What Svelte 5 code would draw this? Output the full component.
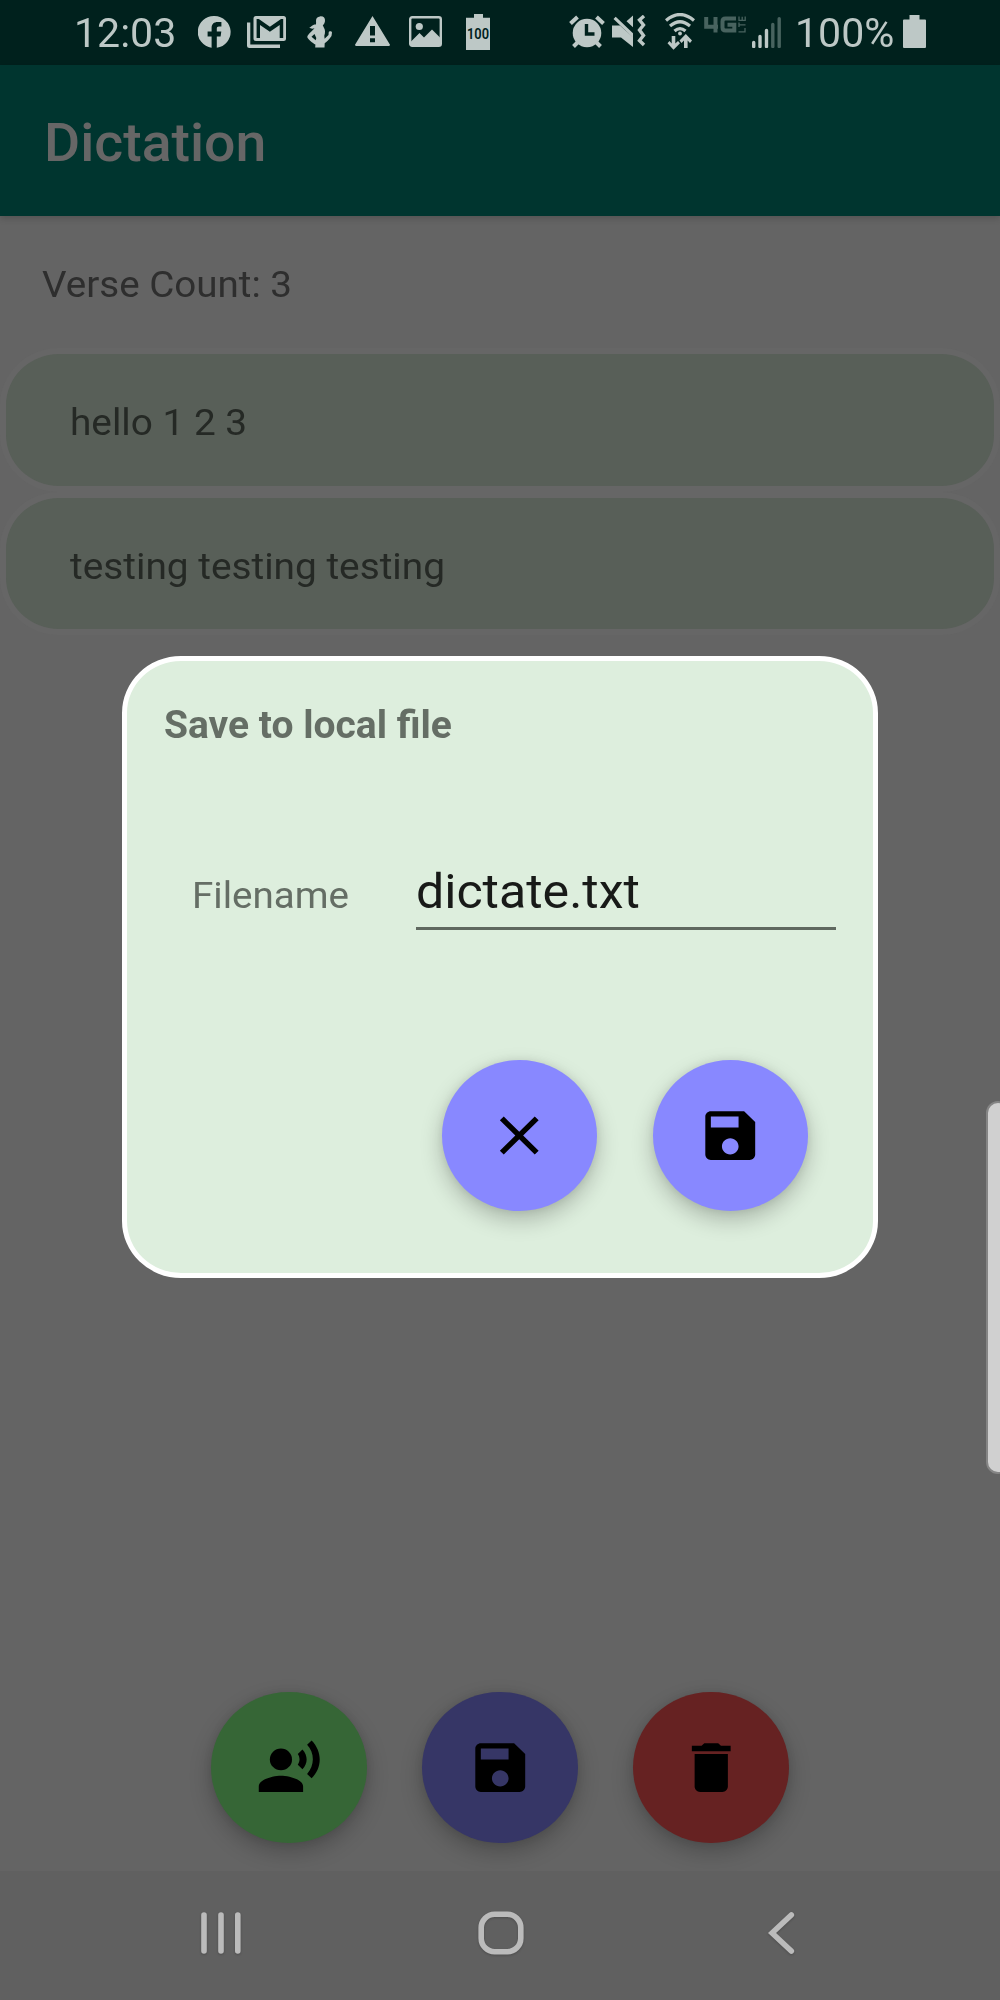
<script>
  const verses = ['hello 1 2 3', 'testing testing testing'];
  const title = 'Dictation';
  const count = 3;
</script>

{#snippet saveIcon()}
  <svg class="glyph" viewBox="0 0 24 24" preserveAspectRatio="none">
    <path d="M17 3H5c-1.11 0-2 .9-2 2v14c0 1.1.89 2 2 2h14c1.1 0 2-.9 2-2V7l-4-4zm-5 16c-1.66 0-3-1.34-3-3s1.34-3 3-3 3 1.34 3 3-1.34 3-3 3zm3-10H5V5h10v4z" />
  </svg>
{/snippet}

<div class="screen">
  <header class="status">
    <span class="time"><span class="wide">12:03</span></span>
    <svg class="i-fb" viewBox="0 0 33 32" width="33" height="32">
      <path d="M16.5 0A16.4 16 0 0 0 13.6 31.8V20.4H9.6V15.6H13.6V12.2C13.6 8 15.8 6 19.8 6H23.4V10.4H21C19.4 10.4 18.8 11.1 18.8 12.6V15.6H23.3L22.6 20.4H18.8V31.8A16.4 16 0 0 0 16.5 0Z" />
    </svg>
    <svg class="i-mail" viewBox="0 0 39 32" width="39" height="32">
      <path fill-rule="evenodd" d="M9 0H36.5Q39 0 39 2.500V22.500Q39 25 36.500 25H9Q6.500 25 6.500 22.500V2.500Q6.500 0 9 0ZM9.600 3V22H13V9L22.900 15.800L32.700 9V22H36.200V3H34L22.900 10.800L11.800 3Z" />
      <path d="M0 6.500H3.300V28.500H33V32H2.500Q0 32 0 29.500Z" />
    </svg>
    <svg class="i-run" viewBox="0 0 25 32" width="25" height="32">
      <path fill-rule="evenodd" d="M13 0.400C16.500 0 18.300 2.200 18 5C17.800 7 17 8.300 15.800 9.200L16.800 11.500C18.300 13.500 18.400 17 17.300 19.800L17.600 22.800L21.500 19L21.700 16.400C22 15 24.800 15 25 16.600L24.500 20C22 23.600 19.800 25.800 17.700 27.300L17.500 31.500H8.200L8.400 28.500C5.500 27 1.500 23.500 0.300 21.200C0.200 19 4.500 15.500 7.500 12.300C5.500 12.900 3.500 12.700 2 11.600C4.500 11.300 4.500 8.500 8.900 8.500C9.300 7.200 9 6.200 9 4.800C9 2 10.500 .7 13 .4ZM7.500 18L4.500 20.800L8.700 24.300L9.300 22Z" />
    </svg>
    <svg class="i-warn" viewBox="0 0 35 30" width="35" height="30">
      <path fill-rule="evenodd" d="M17.500 0L35 28.800Q35 30 33.500 30H1.500Q0 30 0 28.800ZM15 10V19.500H20V10ZM15 22.300V26.300H20V22.300Z" />
    </svg>
    <svg class="i-pic" viewBox="0 0 33 31" width="33" height="31">
      <rect x="1.200" y="1.200" width="30.600" height="28.600" rx="2" fill="none" stroke="#bdc8c6" stroke-width="2.400" />
      <circle cx="10.300" cy="10.500" r="3.600" />
      <path d="M2 25.500L10.500 17L15 21.500L23 13.500L31 21.500V29.500H2Z" />
    </svg>
    <svg class="i-bat100" viewBox="0 0 24 36" width="24" height="36">
      <path d="M8 0H17V3.700H24V36H0V3.700H8Z" />
      <text x="12" y="25" class="pct-mini" text-anchor="middle" textLength="22" lengthAdjust="spacingAndGlyphs">100</text>
    </svg>

    <svg class="i-alarm" viewBox="0 0 36 33" width="36" height="33">
      <circle cx="18" cy="18" r="14.300" />
      <path d="M1.500 8.500L8.500 2M34.500 8.500L27.500 2M9 27L4.500 31.500M27 27L31.500 31.500" fill="none" stroke="#bdc8c6" stroke-width="4" />
      <path d="M17.500 9V19H25.500" fill="none" stroke="#00211d" stroke-width="3.400" />
    </svg>
    <svg class="i-mute" viewBox="0 0 34 32" width="34" height="32">
      <path d="M0 10.500H8L21 22.500V32L9 22.500H0ZM21 .5V12.200L14.500 6.200ZM1.500 4L3.700 1.800L21 18.300V22.500Z" />
      <path d="M32 1L27.500 5L31.500 10L27.500 15L31.500 20.500L27.500 25.500L32 30" fill="none" stroke="#bdc8c6" stroke-width="3.400" />
    </svg>
    <svg class="i-wifi" viewBox="0 0 30 37" width="30" height="37">
      <path d="M1 7.500Q15-4.500 29 7.500M5 13Q15 4.500 25 13M9.500 18Q15 13.200 20.500 18" fill="none" stroke="#bdc8c6" stroke-width="3.200" />
      <circle cx="15" cy="20.500" r="1.900" />
      <path d="M6.700 23H10.300V30.500L13 28L15 30.300L8.500 36.700L2.500 30.300L4.500 28L6.700 30.500ZM19 35H22.600V27.500L25 30L27 27.500L20.800 21L14.500 27.500L16.500 30L19 27.500Z" />
    </svg>
    <svg class="i-lte" viewBox="0 0 42 18" width="42" height="18">
      <path d="M2.200 1V10.800H14M11.500 1V16.500M32 2.500H21.500Q18.500 2.500 18.500 5.500V11.500Q18.500 14.500 21.500 14.500H30.300V8.700H23.500" fill="none" stroke="#48635f" stroke-width="4" />
      <path d="M34.500 15.800H41V12M35 6.500V11M35 8.800H41.500M35 .5V4.300H41.200V.5M38.200 .8V4.300" fill="none" stroke="#48635f" stroke-width="1.300" />
    </svg>
    <svg class="i-signal" viewBox="0 0 29 31" width="29" height="31">
      <path d="M1.700 25.500V29.500M8 19.500V29.500M14.500 13.500V29.500" stroke="#bdc8c6" stroke-width="3.400" stroke-linecap="round" />
      <path d="M20.800 7.500V29.500M27.200 1.700V29.500" stroke="#48635f" stroke-width="3.400" stroke-linecap="round" />
    </svg>
    <span class="level"><span class="wide">100%</span></span>
    <svg class="i-bat" viewBox="0 0 23 33" width="23" height="33">
      <path d="M6.500 0H16.500V4.500H22Q23 4.500 23 5.500V32Q23 33 22 33H1Q0 33 0 32V5.500Q0 4.500 1 4.500H6.500Z" />
    </svg>
  </header>

  <div class="appbar"><h1 class="wide">{title}</h1></div>

  <main>
    <p class="count"><span class="wide">Verse Count: {count}</span></p>
    <ul>
      {#each verses as verse}
        <li><span class="wide">{verse}</span></li>
      {/each}
    </ul>
    <div class="actions">
      <button class="fab green" aria-label="Dictate">
        <svg class="glyph" viewBox="0 0 24 24" preserveAspectRatio="none">
          <circle cx="9" cy="9" r="4" />
          <path d="M9 15c-2.670 0-8 1.340-8 4v2h16v-2c0-2.660-5.330-4-8-4zm7.760-9.640l-1.680 1.690c.84 1.180.84 2.710 0 3.890l1.680 1.690c2.020-2.020 2.020-5.070 0-7.270zM20.070 2l-1.630 1.630c2.770 3.020 2.770 7.560 0 10.740L20.070 16c3.900-3.890 3.910-9.950 0-14z" />
        </svg>
      </button>
      <button class="fab blue" aria-label="Save">{@render saveIcon()}</button>
      <button class="fab red" aria-label="Delete">
        <svg class="glyph" viewBox="0 0 24 24" preserveAspectRatio="none">
          <path d="M6 19c0 1.100.9 2 2 2h8c1.100 0 2-.9 2-2V7H6v12zM19 4h-3.500l-1-1h-5l-1 1H5v2h14V4z" />
        </svg>
      </button>
    </div>
  </main>

  <nav>
    <svg class="recents" viewBox="0 0 40 42" width="40" height="42">
      <path d="M3 3V39M20 3V39M36.800 3V39" />
    </svg>
    <svg class="home" viewBox="0 0 46 44" width="46" height="44">
      <rect x="3.200" y="3.200" width="39.600" height="37.600" rx="13.500" />
    </svg>
    <svg class="back" viewBox="0 0 27 42" width="27" height="42">
      <path d="M23.300 3L4 21L23.300 39" />
    </svg>
  </nav>

  <div class="overlay">
    <section class="dialog">
      <h2><span class="wide">Save to local file</span></h2>
      <div class="field">
        <span class="label"><span class="wide">Filename</span></span>
        <span class="value"><span class="wide">dictate.txt</span></span>
      </div>
      <div class="buttons">
        <button class="fab lilac" aria-label="Cancel">
          <svg class="glyph" viewBox="0 0 24 24" preserveAspectRatio="none">
            <path d="M19 6.410L17.590 5 12 10.590 6.410 5 5 6.410 10.590 12 5 17.590 6.410 19 12 13.410 17.590 19 19 17.590 13.410 12z" />
          </svg>
        </button>
        <button class="fab lilac" aria-label="Save file">{@render saveIcon()}</button>
      </div>
    </section>
  </div>
  <div class="edge"></div>
</div>

<style>
  :global(body) {
    margin: 0;
    background: #646464;
  }
  .screen {
    position: relative;
    width: 1000px;
    height: 2000px;
    overflow: hidden;
    display: flex;
    flex-direction: column;
    background: #646464;
    font-family: Roboto, sans-serif;
  }
  /* glyphs are slightly wider than the font's natural proportions */
  .wide {
    display: inline-block;
    transform: scaleX(1.026);
    transform-origin: left center;
    white-space: nowrap;
  }
  h1, h2, p, ul {
    margin: 0;
    padding: 0;
  }
  .status {
    height: 65px;
    flex: none;
    display: flex;
    align-items: flex-start;
    background: #00211d;
    color: #bdc8c6;
    fill: #bdc8c6;
  }
  .status svg {
    flex: none;
    display: block;
  }
  .time, .level {
    flex: none;
    font-size: 40px;
    line-height: 47px;
    margin-top: 10px;
  }
  .time { margin-left: 74px; width: 124px; }
  .level { margin-left: 14px; width: 108px; }
  .i-fb { margin-top: 16px; }
  .i-mail { margin: 16px 0 0 16px; }
  .i-run { margin: 16px 0 0 21px; }
  .i-warn { margin: 16px 0 0 23px; }
  .i-pic { margin: 16px 0 0 19px; }
  .i-bat100 { margin: 14px 0 0 24px; }
  .i-alarm { margin: 15px 0 0 79px; }
  .i-mute { margin: 15px 0 0 7px; }
  .i-wifi { margin: 13px 0 0 19px; }
  .i-lte { margin: 16px 0 0 9px; }
  .i-signal { margin: 17px 0 0 6px; }
  .i-bat { margin-top: 15px; }
  .pct-mini {
    font: 600 14px Roboto, sans-serif;
    fill: #00211d;
  }
  .appbar {
    height: 151px;
    flex: none;
    display: flex;
    align-items: center;
    padding-left: 44px;
    box-sizing: border-box;
    background: #00352f;
    color: #666;
    box-shadow: 0 2px 7px rgba(0, 0, 0, .2);
    z-index: 1;
  }
  h1 {
    font-size: 54px;
    font-weight: 500;
    line-height: 64px;
    padding-top: 4px;
  }
  main {
    flex: none;
    height: 1655px;
    display: flex;
    flex-direction: column;
  }
  .count {
    height: 132px;
    line-height: 137px;
    padding-left: 42px;
    font-size: 37.600px;
    color: #2e2e2e;
  }
  ul { list-style: none; }
  li {
    box-sizing: border-box;
    height: 143.500px;
    padding-left: 63.500px;
    border: 6px solid #666;
    border-radius: 59px / 57px;
    background: #585f58;
    color: #252925;
    font-size: 37.800px;
    line-height: 137px;
  }
  .actions {
    display: flex;
    justify-content: center;
    gap: 55.500px;
    margin-top: auto;
    padding-bottom: 28px;
  }
  .fab {
    width: 155.500px;
    height: 151.500px;
    padding: 0;
    border: 0;
    border-radius: 50%;
    display: flex;
    align-items: center;
    justify-content: center;
    box-shadow: 0 9px 22px rgba(0, 0, 0, .23), 0 0 8px rgba(0, 0, 0, .08);
  }
  .glyph {
    width: 66.500px;
    height: 65px;
    fill: #000;
  }
  .green { background: #366636; }
  .blue { background: #363666; }
  .red { background: #662222; }
  .lilac { background: #8888ff; }
  nav {
    flex: 1;
    display: flex;
    align-items: flex-start;
    padding: 40px 205px 0 201px;
    justify-content: space-between;
    background: #606060;
    fill: none;
    stroke: #bbb;
    stroke-width: 5.600;
    stroke-linecap: round;
  }
  nav svg { filter: drop-shadow(0 1px 1px rgba(0, 0, 0, .2)); }
  .recents, .back { margin-top: 1px; }
  .home { margin-right: 8px; }
  .overlay {
    position: absolute;
    inset: 0;
    z-index: 2;
    display: flex;
    justify-content: center;
    align-items: flex-start;
    padding-top: 656px;
  }
  .dialog {
    box-sizing: border-box;
    width: 756px;
    height: 622px;
    border: 5.500px solid #fff;
    border-radius: 59px / 57px;
    background: #ddeedd;
    display: flex;
    flex-direction: column;
  }
  h2 {
    padding: 41px 0 0 37px;
    font-size: 38px;
    font-weight: 700;
    line-height: 46px;
    color: #656e65;
  }
  .field {
    display: flex;
    align-items: flex-end;
    margin: 113px 37px 0 65px;
  }
  .label {
    width: 224px;
    font-size: 37.600px;
    line-height: 46px;
    padding-bottom: 12px;
    color: #656e65;
  }
  .value {
    flex: 1;
    font-size: 48.800px;
    line-height: 58px;
    padding-bottom: 6px;
    padding-top: 2px;
    color: #181a18;
    border-bottom: 3px solid #5f685f;
  }
  .buttons {
    display: flex;
    justify-content: flex-end;
    gap: 55.500px;
    margin-top: auto;
    padding: 0 65px 62px 0;
  }
  .edge {
    position: absolute;
    z-index: 3;
    right: -10px;
    top: 1101px;
    width: 24px;
    height: 373px;
    box-sizing: border-box;
    border: 2px solid #858585;
    border-radius: 14px;
    background: #d0d0d0;
  }
</style>
